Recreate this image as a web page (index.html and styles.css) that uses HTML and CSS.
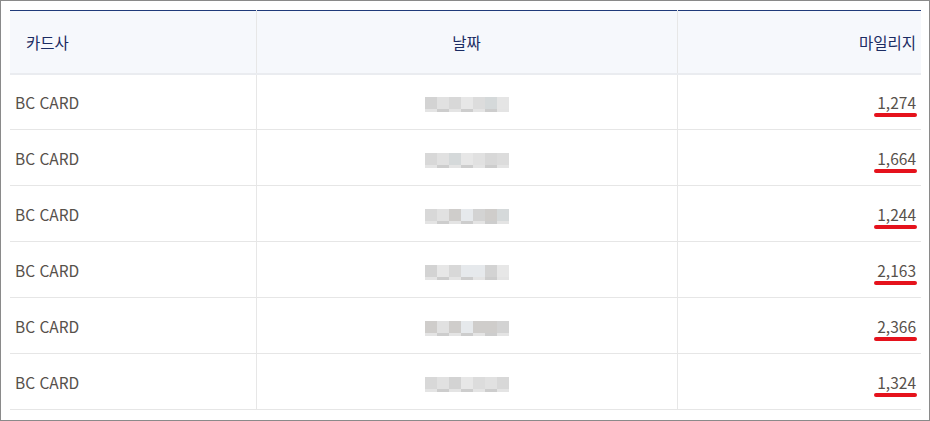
FILE: index.html
```html
<!DOCTYPE html>
<html lang="ko">
<head>
<meta charset="utf-8">
<link rel="stylesheet" href="styles.css">
</head>
<body>
<div class="frame">
  <table class="mileage">
    <thead>
      <tr>
        <th class="c-card">카드사</th>
        <th class="c-date">날짜</th>
        <th class="c-mile">마일리지</th>
      </tr>
    </thead>
    <tbody>
      <tr>
        <td class="c-card">BC CARD</td>
        <td class="c-date"><span class="mosaic"><i class="a"></i><i class="b"></i><i class="c"></i><i class="d"></i><i class="e"></i><i class="f"></i><i class="g"></i></span></td>
        <td class="c-mile"><span class="num">1,274</span></td>
      </tr>
      <tr>
        <td class="c-card">BC CARD</td>
        <td class="c-date"><span class="mosaic"><i class="c"></i><i class="b"></i><i class="f"></i><i class="d"></i><i class="b"></i><i class="c"></i><i class="e"></i></span></td>
        <td class="c-mile"><span class="num">1,664</span></td>
      </tr>
      <tr>
        <td class="c-card">BC CARD</td>
        <td class="c-date"><span class="mosaic"><i class="c"></i><i class="b"></i><i class="g2"></i><i class="h"></i><i class="a"></i><i class="g2"></i><i class="f"></i></span></td>
        <td class="c-mile"><span class="num">1,244</span></td>
      </tr>
      <tr>
        <td class="c-card">BC CARD</td>
        <td class="c-date"><span class="mosaic"><i class="a"></i><i class="d"></i><i class="c"></i><i class="h"></i><i class="h"></i><i class="a"></i><i class="d"></i></span></td>
        <td class="c-mile"><span class="num">2,163</span></td>
      </tr>
      <tr>
        <td class="c-card">BC CARD</td>
        <td class="c-date"><span class="mosaic"><i class="g2"></i><i class="b"></i><i class="g2"></i><i class="h"></i><i class="g2"></i><i class="g2"></i><i class="a"></i></span></td>
        <td class="c-mile"><span class="num">2,366</span></td>
      </tr>
      <tr>
        <td class="c-card">BC CARD</td>
        <td class="c-date"><span class="mosaic"><i class="c"></i><i class="b"></i><i class="a"></i><i class="d"></i><i class="e"></i><i class="b"></i><i class="c"></i></span></td>
        <td class="c-mile"><span class="num">1,324</span></td>
      </tr>
    </tbody>
  </table>
</div>
</body>
</html>
```

FILE: styles.css
```css
* { box-sizing: border-box; }
html, body { margin: 0; padding: 0; background: #ffffff; }
body {
  font-family: "Noto Sans CJK KR", "Noto Sans", sans-serif;
  font-size: 15.5px;
}
.frame {
  width: 930px;
  height: 421px;
  border: 1px solid #8a8a8a;
  padding: 9px 9px 0 9px;
  overflow: hidden;
}
.mileage {
  width: 911px;
  border-collapse: collapse;
  table-layout: fixed;
  border-top: 1px solid #1f3a7a;
}
.mileage th {
  height: 63px;
  background: #f6f8fc;
  color: #1b2c63;
  font-weight: 400;
  border-bottom: 2px solid #eaecf0;
  padding: 0 5px 0 16px;
  line-height: 20px;
}
.mileage td {
  height: 56px;
  color: #57514b;
  border-bottom: 1px solid #e6e6e6;
  padding: 0 5px;
  line-height: 20px;
}
.c-card { width: 246px; text-align: left; }
.c-date { width: 421px; text-align: center; border-left: 1px solid #e7e7e7; border-right: 1px solid #e7e7e7; }
.c-mile { width: 244px; text-align: right; }
.mileage td.c-card { padding-left: 5px; }
.mileage td.c-mile { padding-right: 5px; }
.mileage th.c-date { padding-left: 0; padding-right: 0; }

.mosaic {
  display: inline-flex;
  vertical-align: middle;
  margin-top: 1px;
  margin-left: 1px;
}
.mosaic i {
  display: block;
  width: 12px;
  height: 15px;
  border-bottom: 3px solid #e4e4e4;
}
.mosaic i:nth-child(even) { border-bottom-color: #cdcdcd; }
.mosaic .a { background: #d3d3d3; }
.mosaic .b { background: #e1e1e1; }
.mosaic .c { background: #d8d8d8; }
.mosaic .d { background: #e7e7e7; }
.mosaic .e { background: #dcdcdc; }
.mosaic .f { background: #d5d9da; }
.mosaic .g { background: #e5e5e5; }
.mosaic .g2 { background: #cfcdcb; }
.mosaic .h { background: #e6e9ec; }

.num {
  position: relative;
  display: inline-block;
}
.num::after {
  content: "";
  position: absolute;
  left: -3px;
  right: -1px;
  bottom: -5px;
  height: 4px;
  border-radius: 2px;
  background: #e5121c;
}
```
